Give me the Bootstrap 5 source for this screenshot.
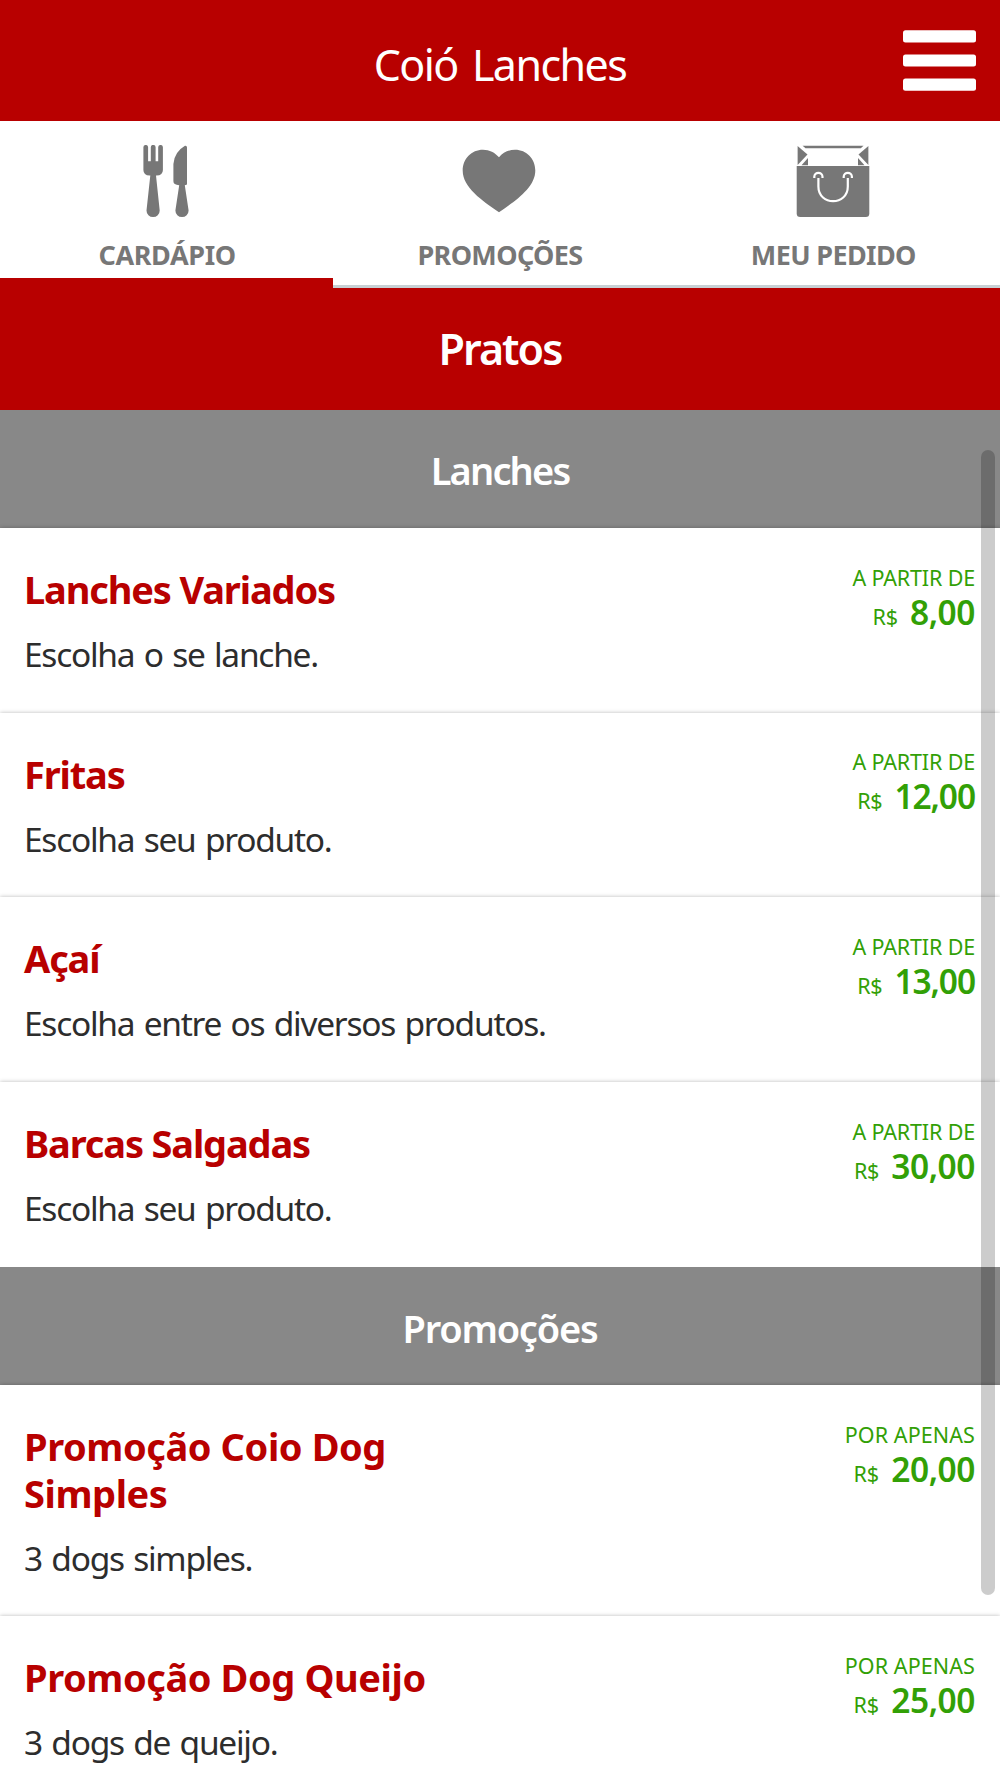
<!DOCTYPE html>
<html lang="pt-BR">
<head>
<meta charset="utf-8">
<meta name="viewport" content="width=device-width, initial-scale=1">
<title>Coió Lanches</title>
<link rel="stylesheet" href="https://cdn.jsdelivr.net/npm/bootstrap@5.3.0/dist/css/bootstrap.min.css">
<style>
  :root { --brand: #b80000; --price: #32a006; --tab: #777; }
  body { font-family: "Noto Sans", "Open Sans", sans-serif; color: #2d2d2d; background: #fff; height: 1778px; overflow: hidden; }

  .top-bar { height: 121px; background: var(--brand); padding: 8px 24px 0; }
  .brand-title { font-size: 43px; line-height: 58px; letter-spacing: -1.55px; word-spacing: 4.5px; }
  .menu-btn { width: 73px; height: 61px; margin-top: -8px; }
  .side { flex: 1 1 0; }

  .tab-bar { height: 167px; }
  .tab-link { height: 167px; padding-top: 24px; color: var(--tab); font-size: 27px; line-height: 37px; font-weight: 700; border-bottom: 3px solid #c8d0d4; letter-spacing: -.63px; }
  .tab-link svg { width: 74px; height: 74px; margin: 0 1px 17px 0; }
  .tab-link.current { border-bottom: 10px solid var(--brand); letter-spacing: -.37px; }
  .tab-link.current span { padding-left: 1px; }

  .page-heading { height: 121.5px; background: var(--brand); font-size: 43px; font-weight: 600; letter-spacing: -1.95px; }
  .group-heading { height: 118.5px; padding-top: 5px; background: #888; font-size: 38px; font-weight: 600; letter-spacing: -1.22px; }
  .group-heading.snug { letter-spacing: -1.85px; padding-top: 4px; }

  .dish { position: relative; background: #fff; padding: 38px 25px 35.7px 24px; box-shadow: 0 0 4px rgba(0, 0, 0, .28); }
  .dish-info { width: 430px; }
  .dish-name { font-size: 38px; line-height: 46.5px; font-weight: 700; color: var(--brand); letter-spacing: -1.15px; margin: 0 0 18.5px; }
  .promo .dish-name { letter-spacing: -.42px; }
  .dish-text { font-size: 33.5px; line-height: 46px; letter-spacing: -1.27px; word-spacing: 2px; margin: 0; white-space: nowrap; }
  .dish-price { color: var(--price); font-size: 21.5px; line-height: 28px; margin-top: -2.5px; letter-spacing: -.15px; }
  .promo .dish-price { letter-spacing: .1px; }
  .amount { line-height: 40px; }
  .amount strong { font-size: 33.5px; font-weight: 600; letter-spacing: -.45px; margin-left: 12px; }
  .amount .from-one { letter-spacing: -1.1px; }

  .scroll-thumb { position: absolute; z-index: 5; left: 981px; top: 450px; width: 14px; height: 1145px; border-radius: 7px; background: rgba(0, 0, 0, .2); }
</style>
</head>
<body class="position-relative">
<header class="top-bar d-flex align-items-center text-white">
  <div class="side"></div>
  <h1 class="brand-title fw-normal m-0">Coió Lanches</h1>
  <div class="side d-flex justify-content-end">
    <button class="menu-btn btn p-0 border-0 d-flex" aria-label="Menu">
      <svg width="73" height="61" viewBox="0 0 73 61" fill="#fff"><rect y=".3" width="73" height="12.2" rx="2.5"/><rect y="24.4" width="73" height="12.2" rx="2.5"/><rect y="48.5" width="73" height="12.2" rx="2.5"/></svg>
    </button>
  </div>
</header>

<nav class="tab-bar row g-0 text-center">
  <a class="tab-link current col-4 d-flex flex-column align-items-center text-decoration-none" href="#">
    <svg viewBox="0 0 74 74" fill="currentColor"><path d="M14.4 2.3a2.3 2.3 0 0 1 4.7 0V16.2h2.7V2.3a2.3 2.3 0 0 1 4.8 0V16.2h2.6V2.3a2.3 2.3 0 0 1 4.7 0V25q0 5.3-6.3 5.6l-.6 0L30.7 65.5a6.6 6.6 0 0 1-13.2 0L21.3 30.6h-.6Q14.4 30.3 14.4 25Z"/><path d="M56 .8Q58 .5 58 2.6V39.5L55.8 40.2L59.6 65.5a6.6 6.6 0 0 1-13.2 0L50.2 40.2Q44.4 40 44.4 36.3V19Q45.3 7 56 .8Z"/></svg>
    <span>CARDÁPIO</span>
  </a>
  <a class="tab-link col-4 d-flex flex-column align-items-center text-decoration-none" href="#">
    <svg viewBox="0 0 74 74" fill="currentColor"><path d="M37 12.3C33 7.5 27.5 4.7 21 4.7C9.500 4.700.7 13.800.7 25.500C.7 42.500 20 55.500 37 67.300C54 55.500 73.300 42.500 73.300 25.500C73.300 13.800 64.500 4.700 53 4.700C46.500 4.700 41 7.500 37 12.300Z"/></svg>
    <span>PROMOÇÕES</span>
  </a>
  <a class="tab-link col-4 d-flex flex-column align-items-center text-decoration-none" href="#">
    <svg viewBox="0 0 74 74" fill="currentColor"><path d="M6.6.7H67.5L64.8 3.2H9.5Z"/><path d="M1.6.9L11.500 9.600L1.600 20Z"/><path d="M72.400.9L62.500 9.600L72.400 20Z"/><path d="M12 13V20.200H5.500Z"/><path d="M62 13V20.200H68.500Z"/><path d="M.7 21H73.300V68.500Q73.300 72 69.800 72H4.200Q.7 72 .7 68.500Z"/><g fill="none" stroke="#fff" stroke-width="2.200"><path d="M18.300 33V31.800C18.300 26.500 26.500 26.500 26.500 31.800V33"/><path d="M47.700 33V31.800C47.700 26.500 55.900 26.500 55.900 31.800V33"/><path d="M22.400 33V41.500C22.400 61 51.800 61 51.800 41.500V33"/></g></svg>
    <span>MEU PEDIDO</span>
  </a>
</nav>

<h2 class="page-heading d-flex align-items-center justify-content-center text-white m-0">Pratos</h2>

<main>
  <h3 class="group-heading snug d-flex align-items-center justify-content-center text-white m-0">Lanches</h3>
  <article class="dish d-flex justify-content-between">
    <div class="dish-info"><h4 class="dish-name">Lanches Variados</h4><p class="dish-text">Escolha o se lanche.</p></div>
    <div class="dish-price text-end"><div>A PARTIR DE</div><div class="amount">R$<strong>8,00</strong></div></div>
  </article>
  <article class="dish d-flex justify-content-between">
    <div class="dish-info"><h4 class="dish-name">Fritas</h4><p class="dish-text">Escolha seu produto.</p></div>
    <div class="dish-price text-end"><div>A PARTIR DE</div><div class="amount">R$<strong class="from-one">12,00</strong></div></div>
  </article>
  <article class="dish d-flex justify-content-between">
    <div class="dish-info"><h4 class="dish-name">Açaí</h4><p class="dish-text">Escolha entre os diversos produtos.</p></div>
    <div class="dish-price text-end"><div>A PARTIR DE</div><div class="amount">R$<strong class="from-one">13,00</strong></div></div>
  </article>
  <article class="dish d-flex justify-content-between">
    <div class="dish-info"><h4 class="dish-name">Barcas Salgadas</h4><p class="dish-text">Escolha seu produto.</p></div>
    <div class="dish-price text-end"><div>A PARTIR DE</div><div class="amount">R$<strong>30,00</strong></div></div>
  </article>

  <h3 class="group-heading d-flex align-items-center justify-content-center text-white m-0 position-relative">Promoções</h3>
  <article class="dish promo d-flex justify-content-between">
    <div class="dish-info"><h4 class="dish-name">Promoção Coio Dog Simples</h4><p class="dish-text">3 dogs simples.</p></div>
    <div class="dish-price text-end"><div>POR APENAS</div><div class="amount">R$<strong>20,00</strong></div></div>
  </article>
  <article class="dish promo d-flex justify-content-between">
    <div class="dish-info"><h4 class="dish-name">Promoção Dog Queijo</h4><p class="dish-text">3 dogs de queijo.</p></div>
    <div class="dish-price text-end"><div>POR APENAS</div><div class="amount">R$<strong>25,00</strong></div></div>
  </article>
</main>
<div class="scroll-thumb"></div>
<script src="https://cdn.jsdelivr.net/npm/bootstrap@5.3.0/dist/js/bootstrap.bundle.min.js"></script>
</body>
</html>
